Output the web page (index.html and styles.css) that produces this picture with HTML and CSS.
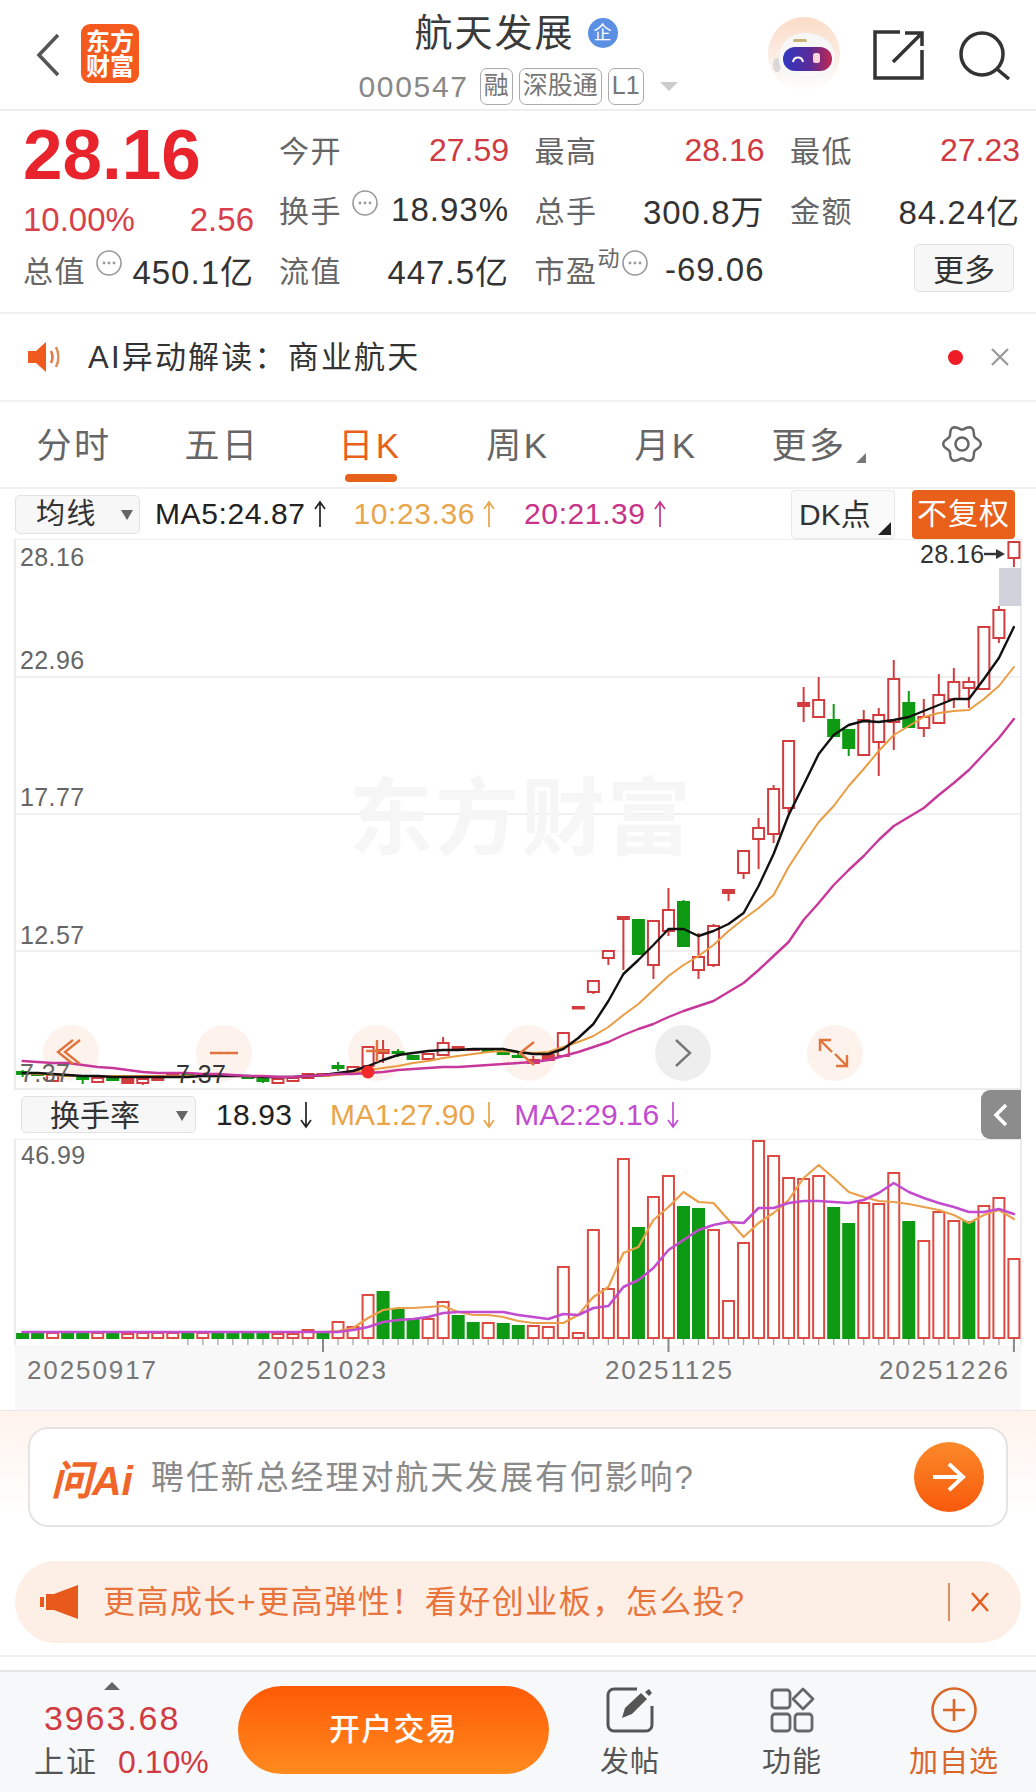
FILE: index.html
```html
<!DOCTYPE html>
<html lang="zh">
<head>
    <meta charset="utf-8">
    <title>航天发展</title>
    <link rel="stylesheet" href="styles.css">
</head>
<body>
    <svg class="defs" width="0" height="0">
        <symbol id="arrow-up" viewBox="0 0 16 28"><path d="M8 27V2M3 9l5-7 5 7" fill="none" stroke="currentColor" stroke-width="1.700"/></symbol>
        <symbol id="arrow-down" viewBox="0 0 16 28"><path d="M8 1v25M3 19l5 7 5-7" fill="none" stroke="currentColor" stroke-width="1.700"/></symbol>
        <symbol id="info" viewBox="0 0 26 26"><circle cx="13" cy="13" r="12" fill="none" stroke="#999" stroke-width="1.6"/><circle cx="8" cy="13" r="1.4" fill="#999"/><circle cx="13" cy="13" r="1.4" fill="#999"/><circle cx="18" cy="13" r="1.4" fill="#999"/></symbol>
    </svg>

    <header class="topbar">
        <svg class="back" viewBox="0 0 24 44"><path d="M22 2L3 22l19 20" fill="none" stroke="#555" stroke-width="3.6"/></svg>
        <div class="logo"><span>东方</span><span>财富</span></div>
        <div class="stock">
            <div class="stock-name">
                <h1>航天发展</h1>
                <span class="ent">企</span>
            </div>
            <div class="stock-sub">
                <span class="code">000547</span>
                <span class="tag">融</span>
                <span class="tag">深股通</span>
                <span class="tag">L1</span>
                <span class="sub-caret"></span>
            </div>
        </div>
        <svg class="robot" viewBox="0 0 74 75">
            <defs>
                <linearGradient id="halo" x2="0" y2="1"><stop offset="0" stop-color="#fbdcc8"/><stop offset=".6" stop-color="#fcefe7"/><stop offset="1" stop-color="#fff"/></linearGradient>
                <linearGradient id="visor"><stop offset="0" stop-color="#3038c0"/><stop offset=".55" stop-color="#5a2a98"/><stop offset="1" stop-color="#c02850"/></linearGradient>
            </defs>
            <ellipse cx="37" cy="37" rx="36" ry="37" fill="url(#halo)"/>
            <ellipse cx="10" cy="48" rx="4" ry="7" fill="#d8d8d8"/>
            <path d="M12 42c0-17 12-26 27-26s29 9 29 26-13 20-28 20-28-5-28-20z" fill="#f7f7f8"/>
            <rect x="26" y="22" width="14" height="3" rx="1.500" fill="#c9b27a"/>
            <rect x="16" y="30" width="49" height="24" rx="12" fill="url(#visor)"/>
            <path d="M26 45c1-6 9-6 10 0" fill="none" stroke="#fff" stroke-width="2"/>
            <rect x="46" y="36" width="7" height="10" rx="2.500" fill="#fbd5de"/>
        </svg>
        <svg class="share" viewBox="0 0 51 50"><path d="M27 2H2v46h47V20M20 32L49 3M32 3h17v13" fill="none" stroke="#333" stroke-width="3.5"/></svg>
        <svg class="search" viewBox="0 0 52 50"><circle cx="23" cy="24" r="21" fill="none" stroke="#333" stroke-width="3.5"/><path d="M38 39l12 10" stroke="#333" stroke-width="3.5"/></svg>
    </header>

    <section class="quote">
        <div class="price-box">
            <div class="price">28.16</div>
            <div class="change"><span>10.00%</span><span>2.56</span></div>
            <div class="stat cap"><span class="label">总值</span><svg class="info"><use href="#info"/></svg><span class="val">450.1亿</span></div>
        </div>
        <div class="stats">
            <div class="stat"><span class="label">今开</span><span class="val up">27.59</span></div>
            <div class="stat"><span class="label">最高</span><span class="val up">28.16</span></div>
            <div class="stat"><span class="label">最低</span><span class="val up">27.23</span></div>
            <div class="stat"><span class="label">换手</span><svg class="info"><use href="#info"/></svg><span class="val">18.93%</span></div>
            <div class="stat"><span class="label">总手</span><span class="val">300.8万</span></div>
            <div class="stat"><span class="label">金额</span><span class="val">84.24亿</span></div>
            <div class="stat"><span class="label">流值</span><span class="val">447.5亿</span></div>
            <div class="stat"><span class="label">市盈</span><sup class="dyn">动</sup><svg class="info info-dyn"><use href="#info"/></svg><span class="val">-69.06</span></div>
            <div class="stat more-cell"><button class="more">更多</button></div>
        </div>
    </section>

    <section class="ai-row">
        <svg class="speaker" viewBox="0 0 32 30"><path d="M0 9h8l10-9v30L8 21H0z" fill="#f05a1e"/><path d="M23 9c2 4 2 8 0 12" fill="none" stroke="#dd7a44" stroke-width="2.600"/><path d="M28 5c3 6 3 14 0 20" fill="none" stroke="#dd8c5c" stroke-width="2.600"/></svg>
        <span class="ai-text">AI异动解读：商业航天</span>
        <span class="red-dot"></span>
        <svg class="close" viewBox="0 0 20 20"><path d="M2 2l16 16M18 2L2 18" stroke="#999" stroke-width="2.2"/></svg>
    </section>

    <nav class="tabs">
        <span class="tab">分时</span>
        <span class="tab">五日</span>
        <span class="tab active">日K</span>
        <span class="tab">周K</span>
        <span class="tab">月K</span>
        <span class="tab tab-more">更多</span>
        <span class="tab"><svg class="gear" viewBox="0 0 40 38"><path id="gear-edge" fill="none" stroke="#666" stroke-width="2.500" stroke-linejoin="round"/><circle cx="20" cy="19" r="6.500" fill="none" stroke="#666" stroke-width="2.500"/></svg></span>
    </nav>

    <div class="ma-bar">
        <span class="select select-ma">均线</span>
        <span class="ma ma-first">MA5:24.87<svg class="arrow"><use href="#arrow-up"/></svg></span>
        <span class="ma ma-10">10:23.36<svg class="arrow"><use href="#arrow-up"/></svg></span>
        <span class="ma ma-20">20:21.39<svg class="arrow"><use href="#arrow-up"/></svg></span>
        <span class="dk">DK点</span>
        <span class="adjust">不复权</span>
    </div>

    <svg class="chart" id="kline" viewBox="0 539 1036 551" width="1036" height="551">
        <rect x="15" y="539" width="1006" height="550" fill="#fff" stroke="#e6e6e6" stroke-width="1.5"/>
        <path d="M15 677h1006M15 814h1006M15 951h1006" stroke="#ececec" stroke-width="1.5"/>
        <text class="watermark" x="349" y="848">东方财富</text>
        <circle class="fab" cx="71" cy="1053" r="28"/>
        <circle class="fab" cx="224" cy="1053" r="28"/>
        <circle class="fab" cx="376" cy="1053" r="28"/>
        <circle class="fab" cx="529" cy="1053" r="28"/>
        <circle class="fab fab-gray" cx="683" cy="1053" r="28"/>
        <circle class="fab" cx="835" cy="1053" r="28"/>
        <rect x="999" y="568" width="22" height="38" fill="#d2d2dc"/>
        <g id="candles"></g>
        <g id="ma-lines"></g>
        <text class="axis" x="20" y="566">28.16</text>
        <text class="axis" x="20" y="669">22.96</text>
        <text class="axis" x="20" y="806">17.77</text>
        <text class="axis" x="20" y="944">12.57</text>
        <text class="axis" x="20" y="1082">7.37</text>
        <text class="axis axis-dark" x="176" y="1083">7.37</text>
        <text class="axis axis-dark" x="920" y="563">28.16</text>
        <path d="M984 554h14" stroke="#333" stroke-width="2.400"/>
        <path d="M996 549l9 5-9 5z" fill="#333"/>
        <circle cx="368" cy="1072" r="6.500" fill="#f22a2a"/>
        <path class="glyph" d="M73 1040l-15 12 15 12M80 1040l-15 12 15 12M210 1053h28M366 1051h22M377 1040v22M534 1042l-14 11 14 12"/>
        <path class="glyph glyph-gray" d="M676 1040l14 13-14 13"/>
        <path class="glyph" d="M820 1051v-11h11M820 1040l12 12M847 1055v11h-11M847 1066l-12-12"/>
    </svg>

    <div class="vol-bar">
        <span class="select select-vol">换手率</span>
        <span class="ma ma-rate">18.93<svg class="arrow"><use href="#arrow-down"/></svg></span>
        <span class="ma ma-v1">MA1:27.90<svg class="arrow"><use href="#arrow-down"/></svg></span>
        <span class="ma ma-v2">MA2:29.16<svg class="arrow"><use href="#arrow-down"/></svg></span>
        <span class="fold"><svg viewBox="0 0 16 26"><path d="M13 3L3 13l10 10" fill="none" stroke="#fff" stroke-width="3.600"/></svg></span>
    </div>

    <svg class="chart" id="volume" viewBox="0 1139 1036 271" width="1036" height="271">
        <rect x="15" y="1345" width="1006" height="65" fill="#f8f8f9"/>
        <path d="M15 1139h1006M15 1139v206M1021 1139v206" fill="none" stroke="#e6e6e6" stroke-width="1.5"/>
        <text class="axis" x="21" y="1164">46.99</text>
        <g id="ticks"></g>
        <g id="bars"></g>
        <g id="vol-lines"></g>
        <text class="axis date" x="27" y="1379">20250917</text>
        <text class="axis date" x="257" y="1379">20251023</text>
        <text class="axis date" x="605" y="1379">20251125</text>
        <text class="axis date" x="879" y="1379">20251226</text>
    </svg>

    <section class="ask">
        <div class="ask-box">
            <span class="ask-logo">问Ai</span>
            <span class="ask-text">聘任新总经理对航天发展有何影响?</span>
            <span class="ask-go"><svg viewBox="0 0 36 32"><path d="M2 16h30M18 3l14 13-14 13" fill="none" stroke="#fff" stroke-width="4"/></svg></span>
        </div>
    </section>

    <section class="promo">
        <div class="promo-bar">
            <svg class="horn" viewBox="0 0 38 34"><path d="M0 12h4v10H0zM6 9h8L38 0v34L14 25v0H6z" fill="#e8591c"/></svg>
            <span class="promo-text">更高成长+更高弹性！看好创业板，怎么投?</span>
            <span class="promo-line"></span>
            <svg class="promo-x" viewBox="0 0 20 22"><path d="M2 2l16 18M18 2L2 20" stroke="#e8591c" stroke-width="2.400"/></svg>
        </div>
    </section>

    <footer class="footer">
        <div class="index">
            <span class="index-caret"></span>
            <span class="index-val">3963.68</span>
            <div class="index-row"><span class="index-name">上证</span><span class="index-pct">0.10%</span></div>
        </div>
        <button class="trade">开户交易</button>
        <div class="tool">
            <svg viewBox="0 0 48 46"><path d="M31 2H8a6 6 0 0 0-6 6v30a6 6 0 0 0 6 6h32a6 6 0 0 0 6-6V19" fill="none" stroke="#555" stroke-width="3"/><path d="M16 31l3-10 16-15 6 6-15 15z" fill="#555"/><path d="M39 5l4-3 3 4-3 3z" fill="#555"/></svg>
            <span>发帖</span>
        </div>
        <div class="tool">
            <svg viewBox="0 0 44 46"><g fill="none" stroke="#666" stroke-width="2.800"><rect x="2" y="3" width="18" height="18" rx="3"/><rect x="2" y="27" width="18" height="17" rx="3"/><rect x="25" y="27" width="17" height="17" rx="3"/><path d="M33 2l10 10-10 10-10-10z" stroke-linejoin="round"/></g></svg>
            <span>功能</span>
        </div>
        <div class="tool tool-add">
            <svg viewBox="0 0 48 46"><circle cx="24" cy="23" r="21.500" fill="none" stroke="#d9662a" stroke-width="2.600"/><path d="M24 12v22M13 23h22" stroke="#d9662a" stroke-width="2.600"/></svg>
            <span>加自选</span>
        </div>
    </footer>

    <script src="chart.js"></script>
</body>
</html>
```
FILE: styles.css
```css
* {
    box-sizing: border-box;
}
html, body {
    margin: 0;
    padding: 0;
}
body {
    width: 1036px;
    height: 1792px;
    overflow: hidden;
    background: #fff;
    color: #333;
    font-family: "Liberation Sans", "Noto Sans CJK SC", sans-serif;
}
.defs {
    position: absolute;
}

/* top bar */
.topbar {
    display: flex;
    align-items: flex-start;
    height: 111px;
    padding: 0 25px 0 36px;
    border-bottom: 2px solid #eeeeee;
}
.back {
    width: 24px;
    height: 44px;
    margin-top: 33px;
    flex: none;
}
.logo {
    width: 58px;
    height: 59px;
    margin: 24px 0 0 21px;
    flex: none;
    display: flex;
    flex-direction: column;
    align-items: center;
    justify-content: center;
    background: #f4591e;
    border-radius: 9px;
    color: #fff;
    font-size: 24px;
    font-weight: 700;
    line-height: 25px;
}
.stock {
    flex: 1;
    margin-left: 126px;
    display: flex;
    flex-direction: column;
    align-items: center;
    padding-top: 13px;
}
.stock-name {
    display: flex;
    align-items: center;
    height: 40px;
}
.stock-name h1 {
    margin: 0;
    font-size: 38px;
    font-weight: 400;
    letter-spacing: 2px;
    line-height: 40px;
    color: #3a3a3a;
}
.ent {
    width: 30px;
    height: 30px;
    margin-left: 13px;
    border-radius: 50%;
    background: #5b8fe4;
    color: #fff;
    font-size: 18px;
    line-height: 30px;
    text-align: center;
}
.stock-sub {
    display: flex;
    align-items: center;
    height: 37px;
    margin-top: 15px;
    padding-left: 4px;
}
.code {
    font-size: 30px;
    letter-spacing: 1.7px;
    color: #888;
    margin-right: 11px;
}
.tag {
    height: 37px;
    padding: 0 3px;
    margin-right: 6px;
    border: 1.5px solid #aaa;
    border-radius: 7px;
    font-size: 25px;
    line-height: 33px;
    color: #777;
}
.sub-caret {
    width: 0;
    height: 0;
    margin-left: 10px;
    border-left: 9px solid transparent;
    border-right: 9px solid transparent;
    border-top: 9px solid #ccc;
}
.robot {
    width: 74px;
    height: 75px;
    margin-top: 17px;
    flex: none;
}
.share {
    width: 51px;
    height: 50px;
    margin: 30px 0 0 32px;
    flex: none;
}
.search {
    width: 52px;
    height: 50px;
    margin: 30px 0 0 35px;
    flex: none;
}

/* quote */
.quote {
    display: flex;
    height: 203px;
    padding: 9px 17px 0 23px;
    border-bottom: 2px solid #f0f0f0;
}
.price-box {
    width: 231px;
    flex: none;
}
.price {
    height: 70px;
    font-size: 71px;
    font-weight: 700;
    line-height: 70px;
    color: #e8232b;
}
.change {
    display: flex;
    justify-content: space-between;
    align-items: center;
    height: 52px;
    margin-top: 4px;
    font-size: 33px;
    color: #d8404a;
}
.stats {
    flex: 1;
    margin: 0 0 0 25px;
    display: grid;
    grid-template-columns: repeat(3, 230px);
    grid-auto-rows: 60px;
    column-gap: 25.5px;
    align-content: start;
}
.stat {
    display: flex;
    align-items: center;
    font-size: 33px;
}
.stat.cap {
    height: 52px;
    margin-top: -2px;
}
.label {
    padding-bottom: 3px;
    font-size: 30px;
    letter-spacing: 1.5px;
    color: #666;
}
.val {
    margin-left: auto;
    letter-spacing: 1px;
    color: #333;
}
.val.up {
    font-size: 32px;
    letter-spacing: 0;
    color: #d03a42;
}
.info {
    width: 26px;
    height: 26px;
    margin: 10px 0 0 10px;
    align-self: flex-start;
    flex: none;
}
.cap .info {
    margin-top: 6px;
}
.dyn {
    align-self: flex-start;
    margin: 7px 0 0 0;
    font-size: 22px;
    line-height: 24px;
    color: #666;
}
.info-dyn {
    margin-left: 2px;
}
.more-cell {
    justify-content: flex-end;
    padding: 0 6px 4px 0;
}
.more {
    width: 100px;
    height: 48px;
    padding: 0 0 3px;
    background: #f7f7f7;
    border: 1px solid #e2e2e2;
    border-radius: 5px;
    font: inherit;
    font-size: 31px;
    letter-spacing: 0;
    color: #333;
}

/* AI notice */
.ai-row {
    display: flex;
    align-items: center;
    height: 88px;
    padding: 0 26px 0 28px;
    border-bottom: 2px solid #f1f1f1;
}
.speaker {
    width: 32px;
    height: 30px;
    flex: none;
}
.ai-text {
    margin-left: 28px;
    padding-bottom: 6px;
    font-size: 31px;
    letter-spacing: 2.2px;
    color: #333;
}
.red-dot {
    width: 15px;
    height: 15px;
    margin-left: auto;
    border-radius: 50%;
    background: #ee1c25;
}
.close {
    width: 20px;
    height: 20px;
    margin-left: 27px;
}

/* period tabs */
.tabs {
    display: grid;
    grid-template-columns: repeat(7, 148px);
    height: 87px;
    border-bottom: 2px solid #f1f1f1;
}
.tab {
    position: relative;
    display: flex;
    align-items: center;
    justify-content: center;
    padding-bottom: 5px;
    font-size: 35px;
    letter-spacing: 2.5px;
    color: #666;
}
.tab.active {
    color: #e8611a;
}
.tab.active::after {
    content: "";
    position: absolute;
    left: 49px;
    bottom: 5px;
    width: 52px;
    height: 8px;
    border-radius: 4px;
    background: #e8611a;
}
.tab-more {
    padding-right: 10px;
}
.tab-more::after {
    content: "";
    position: absolute;
    left: 116px;
    top: 51px;
    border-left: 10px solid transparent;
    border-bottom: 10px solid #777;
}
.gear {
    width: 40px;
    height: 38px;
    margin-bottom: -3px;
}

/* indicator bars */
.ma-bar, .vol-bar {
    display: flex;
    align-items: center;
    padding-left: 15px;
}
.ma-bar {
    height: 50px;
    padding-right: 21px;
}
.vol-bar {
    height: 49px;
    padding-left: 21px;
    padding-right: 15px;
}
.select {
    position: relative;
    flex: none;
    background: #f7f7f7;
    border: 1px solid #e2e2e2;
    border-radius: 5px;
    font-size: 29px;
    letter-spacing: 1.5px;
    color: #333;
}
.select::after {
    content: "";
    position: absolute;
    top: 50%;
    margin-top: -4px;
    border-left: 6px solid transparent;
    border-right: 6px solid transparent;
    border-top: 10px solid #666;
}
.select-ma {
    width: 125px;
    height: 39px;
    line-height: 36px;
    padding-left: 20px;
}
.select-ma::after {
    left: 105px;
}
.select-vol {
    width: 175px;
    height: 37px;
    line-height: 38px;
    padding-left: 28px;
    letter-spacing: 0;
    font-size: 30px;
}
.select-vol::after {
    left: 154px;
}
.ma {
    display: flex;
    align-items: center;
    font-size: 30px;
    color: #222;
    letter-spacing: .6px;
}
.ma-first {
    margin-left: 15px;
}
.ma-10 {
    margin-left: 26px;
    color: #e8a54a;
}
.ma-20 {
    margin-left: 27px;
    color: #c8338a;
}
.ma-rate {
    margin-left: 20px;
    letter-spacing: .2px;
}
.ma-v1 {
    margin-left: 16px;
    letter-spacing: 0;
    color: #e8a54a;
}
.ma-v2 {
    margin-left: 17px;
    letter-spacing: 0;
    color: #c24bcf;
}
.arrow {
    width: 16px;
    height: 28px;
    margin-left: 6px;
    flex: none;
}
.dk {
    position: relative;
    width: 104px;
    height: 49px;
    margin-left: auto;
    padding-left: 7px;
    background: #fafafa;
    border: 1px solid #e8e8e8;
    border-radius: 4px;
    font-size: 30px;
    line-height: 47px;
    color: #333;
}
.dk::after {
    content: "";
    position: absolute;
    right: 3px;
    bottom: 3px;
    border-left: 13px solid transparent;
    border-bottom: 13px solid #222;
}
.adjust {
    width: 103px;
    height: 49px;
    margin-left: 17px;
    background: #e8601a;
    border-radius: 4px;
    color: #fff;
    font-size: 30px;
    line-height: 47px;
    text-align: center;
    letter-spacing: 1px;
}
.fold {
    display: flex;
    align-items: center;
    justify-content: center;
    width: 40px;
    height: 49px;
    margin-left: auto;
    background: #8c8c8c;
    border-radius: 9px 0 0 9px;
}
.fold svg {
    width: 16px;
    height: 26px;
}

/* charts */
.chart {
    display: block;
}
.watermark {
    font-size: 84px;
    font-weight: 700;
    letter-spacing: 2px;
    fill: #f6f6f6;
}
.fab {
    fill: #fdf2ec;
}
.fab-gray {
    fill: #eeeeee;
}
.axis {
    font-size: 25px;
    letter-spacing: .4px;
    fill: #666;
}
.axis-dark {
    fill: #333;
}
.date {
    font-size: 26px;
    letter-spacing: 1.9px;
    fill: #777;
}
.glyph {
    fill: none;
    stroke: #e0743c;
    stroke-width: 2.4;
}
.glyph-gray {
    stroke: #777;
}

/* ask AI */
.ask {
    height: 151px;
    padding: 16px 28px 0;
    background: linear-gradient(#fff3ec, #fff 70%);
    border-top: 1px solid #e8e8e8;
}
.ask-box {
    display: flex;
    align-items: center;
    height: 100px;
    padding: 0 22px 0 21px;
    background: #fff;
    border: 2px solid #e6e3e3;
    border-radius: 20px;
}
.ask-logo {
    font-size: 41px;
    font-weight: 700;
    font-style: italic;
    color: #f0652a;
}
.ask-text {
    margin-left: 18px;
    padding-bottom: 4px;
    font-size: 33px;
    letter-spacing: 1.9px;
    color: #8a8a8a;
}
.ask-go {
    display: flex;
    align-items: center;
    justify-content: center;
    width: 70px;
    height: 70px;
    margin-left: auto;
    border-radius: 50%;
    background: linear-gradient(#fb8a2a, #f8590c);
}
.ask-go svg {
    width: 36px;
    height: 32px;
}
.promo {
    height: 96px;
    padding: 0 15px;
    border-bottom: 2px solid #eeeeee;
}
.promo-bar {
    display: flex;
    align-items: center;
    height: 82px;
    padding: 0 31px 0 25px;
    border-radius: 41px;
    background: #fdeee6;
}
.horn {
    width: 38px;
    height: 34px;
    flex: none;
}
.promo-text {
    margin-left: 25px;
    padding-bottom: 6px;
    font-size: 32px;
    letter-spacing: 1.500px;
    color: #e8743c;
}
.promo-line {
    width: 2px;
    height: 38px;
    margin-left: auto;
    background: #d9925f;
}
.promo-x {
    width: 20px;
    height: 22px;
    margin-left: 20px;
}

/* bottom bar */
.footer {
    display: flex;
    align-items: flex-start;
    height: 122px;
    margin-top: 13px;
    background: #f7f8fa;
    border-top: 2px solid #e4e4e4;
}
.index {
    width: 238px;
    padding: 10px 20px 0 34px;
    display: flex;
    flex-direction: column;
    color: #d03a42;
    flex: none;
}
.index-caret {
    width: 0;
    height: 0;
    margin-left: 70px;
    border-left: 8px solid transparent;
    border-right: 8px solid transparent;
    border-bottom: 8px solid #666;
}
.index-val {
    margin: 8px 0 0 10px;
    font-size: 34px;
    line-height: 40px;
    letter-spacing: 1.9px;
}
.index-row {
    display: flex;
    align-items: center;
    margin-top: 4px;
    line-height: 40px;
}
.index-name {
    font-size: 30px;
    letter-spacing: 2px;
    color: #555;
}
.index-pct {
    margin-left: 20px;
    font-size: 32px;
}
.trade {
    width: 311px;
    height: 88px;
    margin-top: 14px;
    padding: 0 0 8px;
    flex: none;
    border: 0;
    border-radius: 44px;
    background: linear-gradient(#ff5a06, #ff8a1e);
    color: #fff;
    font: inherit;
    font-size: 31px;
    font-weight: 500;
    letter-spacing: 1.2px;
}
.tool {
    width: 162px;
    flex: none;
    display: flex;
    flex-direction: column;
    align-items: center;
    padding-top: 15px;
    font-size: 29px;
    line-height: 36px;
    letter-spacing: 1px;
    color: #555;
}
.tool svg {
    height: 46px;
    width: 48px;
    margin-bottom: 11px;
}
.tool-add {
    color: #d9662a;
}
```
FILE: chart.js
```js
const SVG_NS = 'http://www.w3.org/2000/svg';
const X0 = 22.6;
const STEP = 15.02;
const RED = '#d23c3f';
const GREEN = '#0e9a12';

function xAt(i) {
    return X0 + i * STEP;
}

function add(parent, tag, attrs) {
    const el = document.createElementNS(SVG_NS, tag);
    Object.keys(attrs).forEach(k => el.setAttribute(k, attrs[k]));
    parent.appendChild(el);
    return el;
}

function drawLine(parent, ys, color, width, start) {
    const pts = ys.map((y, i) => xAt(i + (start || 0)).toFixed(1) + ',' + y).join(' ');
    add(parent, 'polyline', {
        points: pts, fill: 'none', stroke: color,
        'stroke-width': width, 'stroke-linejoin': 'round', 'stroke-linecap': 'round'
    });
}

// [kind, wickTop, bodyTop, bodyBottom, wickBottom], r hollow red, f solid red, g solid green
const candles = [
    ['g',1070,1072,1074,1077],['g',1074,1074,1075,1075],['r',1075,1075,1081,1081],['g',1075,1075,1076,1076],
    ['g',1077,1077,1079,1084],['r',1078,1078,1082,1082],['g',1078,1078,1080,1080],['f',1079,1079,1083,1083],
    ['r',1079,1079,1083,1085],['f',1077,1077,1080,1080],['f',1074,1074,1076,1076],['g',1075,1075,1076,1076],
    ['g',1075,1075,1076,1076],['g',1075,1075,1076,1076],['g',1075,1075,1076,1076],['g',1077,1077,1078,1078],
    ['g',1077,1079,1081,1083],['r',1079,1079,1083,1083],['r',1078,1078,1081,1081],['f',1074,1074,1078,1078],
    ['f',1074,1074,1076,1076],['g',1062,1066,1068,1071],['r',1067,1067,1072,1072],['r',1047,1047,1066,1068],
    ['f',1040,1050,1053,1063],['g',1049,1052,1053,1057],['g',1056,1056,1059,1059],['r',1054,1054,1059,1059],
    ['r',1037,1043,1055,1055],['f',1047,1047,1050,1050],['f',1049,1049,1050,1050],['g',1050,1050,1051,1051],
    ['g',1051,1051,1054,1054],['g',1053,1056,1057,1058],['f',1056,1060,1063,1065],['f',1055,1055,1060,1060],
    ['r',1033,1033,1056,1057],['f',1007,1007,1008.5,1008.5],['r',981,981,992,994],['r',951,951,958,965],
    ['f',917,917,919,970],['g',920,920,954,954],['r',921,921,965,979],['r',888,910,931,936],
    ['g',900,902,946,946],['r',933,957,970,979],['r',924,926,965,967],['f',890,890,893,901],
    ['r',851,851,873,879],['r',818,828,839,869],['r',785,789,834,843],['r',741,741,808,813],
    ['f',687,703,706,722],['r',677,700,717,717],['g',704,720,736,736],['g',729,730,748,756],
    ['r',710,720,755,755],['r',708,715,742,776],['r',660,679,722,750],['g',691,703,727,727],
    ['r',699,717,728,737],['r',674,695,723,724],['r',668,682,699,708],['r',677,682,688,708],
    ['r',627,627,689,689],['r',606,610,638,643],['r',542,542,558,567]
];

const ma5 = [1073,1073,1074,1075,1076,1076,1077,1077,1077,1077,1077,1077,1076,1076,1076,1076,1077,1077,1077,1076,1075,1073,
    1071,1066,1060,1055,1053,1051,1050,1050,1049,1049,1049,1052,1054,1054,
    1049,1038,1024,1001,974,960,945,929,929,936,931,924,913,886,854,815,785,754,735,725,721,722,720,717,711,705,699,699,679,658,627];
const ma10 = [1073,1074,1075,1076,1076,1076,1076,1076,1076,1076,1076,1076,1076,1076,1076,1076,1077,1077,1077,1076,1076,1075,1073,
    1070,1068,1066,1063,1061,1058,1056,1054,1052,1051,1052,1053,1052,
    1047,1042,1036,1027,1015,1004,990,976,965,956,945,931,919,908,895,867,844,822,806,786,769,751,735,726,717,713,711,710,699,686,667];
const ma20 = [1061,1062,1063,1063,1065,1067,1068,1070,1072,1073,1073,1073,1074,1074,1075,1076,1076,1077,1077,1076,1075,1074,1074,
    1073,1072,1070,1069,1068,1067,1067,1066,1065,1064,1063,1062,1060,
    1056,1052,1047,1042,1035,1029,1024,1017,1011,1006,1001,992,983,970,956,942,920,903,885,870,856,840,826,817,808,795,783,770,754,738,719];

// [kind, top of bar]
const VOL_BASE = 1338;
const bars = [
    ['g',1334],['g',1333],['r',1333],['g',1333],['g',1333],['r',1333],['g',1334],['r',1334],['r',1333],['r',1333],
    ['r',1333],['g',1334],['r',1333],['g',1333],['g',1333],['g',1333],['g',1333],['r',1334],['r',1334],['r',1330],
    ['g',1333],['r',1322],['r',1327],['r',1295],['g',1292],['g',1310],['g',1320],['r',1319],['r',1302],['g',1316],
    ['g',1323],['r',1323],['g',1324],['g',1326],['r',1326],['r',1327],
    ['r',1267],['r',1333],['r',1230],['r',1289],['r',1159],['g',1228],['r',1197],['r',1176],['g',1207],['g',1209],
    ['r',1230],['r',1301],['r',1243],['r',1141],['r',1156],['r',1178],['r',1179],['r',1176],['g',1208],['g',1224],
    ['r',1203],['r',1204],['r',1173],['g',1222],['r',1241],['r',1212],['r',1221],['g',1222],['r',1206],['r',1198],['r',1259]
];

const volMa1 = [1332,1332,1332,1332,1332,1332,1332,1332,1332,1332,1332,1332,1332,1332,1332,1332,1332,1332,1332,1332,1332,
    1331,1328,1318,1310,1308,1308,1307,1306,1312,1315,1315,1317,1321,1323,1323,
    1323,1315,1297,1287,1253,1247,1220,1207,1192,1202,1203,1220,1237,1223,1213,1200,1178,1165,1178,1192,1197,1201,1202,1204,1207,1210,1215,1223,1215,1210,1219];
const volMa2 = [1332,1332,1332,1332,1332,1332,1332,1332,1332,1332,1332,1332,1332,1332,1332,1332,1332,1332,1332,1332,1332,1332,
    1330,1327,1322,1320,1319,1317,1313,1312,1312,1312,1312,1315,1317,1319,
    1314,1315,1308,1306,1287,1280,1268,1250,1240,1230,1225,1222,1223,1208,1208,1203,1201,1201,1202,1203,1200,1193,1183,1192,1198,1203,1207,1212,1212,1209,1214];

function drawCandles() {
    const group = document.getElementById('candles');
    candles.forEach((c, i) => {
        const x = xAt(i);
        const color = c[0] === 'g' ? GREEN : RED;
        add(group, 'line', { x1: x, x2: x, y1: c[1], y2: c[4], stroke: color, 'stroke-width': 2 });
        add(group, 'rect', {
            x: x - 5.5, y: c[2], width: 11, height: c[3] - c[2],
            fill: c[0] === 'r' ? '#fff' : color, stroke: color, 'stroke-width': 2
        });
    });
    const lines = document.getElementById('ma-lines');
    drawLine(lines, ma10, '#ea9c42', 2);
    drawLine(lines, ma5, '#111', 2.4);
    drawLine(lines, ma20, '#c8389a', 2.4);
}

function drawVolume() {
    const ticks = document.getElementById('ticks');
    for (let i = 11; i < bars.length; i++) {
        const major = i === 20 || i === 43 || i === 66;
        add(ticks, 'line', {
            x1: xAt(i), x2: xAt(i), y1: 1339, y2: major ? 1352 : 1345,
            stroke: major ? '#888' : '#aaa', 'stroke-width': major ? 2 : 1.4
        });
    }
    const group = document.getElementById('bars');
    bars.forEach((b, i) => {
        const red = b[0] === 'r';
        add(group, 'rect', {
            x: xAt(i) - 5.5, y: b[1], width: 11, height: VOL_BASE - b[1],
            fill: red ? '#fff' : GREEN, stroke: red ? '#dc4a42' : GREEN, 'stroke-width': 2
        });
    });
    const lines = document.getElementById('vol-lines');
    drawLine(lines, volMa1, '#ea9f4a', 2.2);
    drawLine(lines, volMa2, '#c24bcf', 2.6);
}

// settings icon: six soft lobes round the centre
function drawGear() {
    const pts = [];
    for (let a = 0; a < 360; a += 5) {
        const t = a * Math.PI / 180;
        const r = 16.6 + 2.2 * Math.cos(6 * t);
        pts.push((20 + r * Math.cos(t)).toFixed(1) + ' ' + (19 + r * Math.sin(t)).toFixed(1));
    }
    document.getElementById('gear-edge').setAttribute('d', 'M' + pts.join('L') + 'Z');
}

drawCandles();
drawVolume();
drawGear();
```
